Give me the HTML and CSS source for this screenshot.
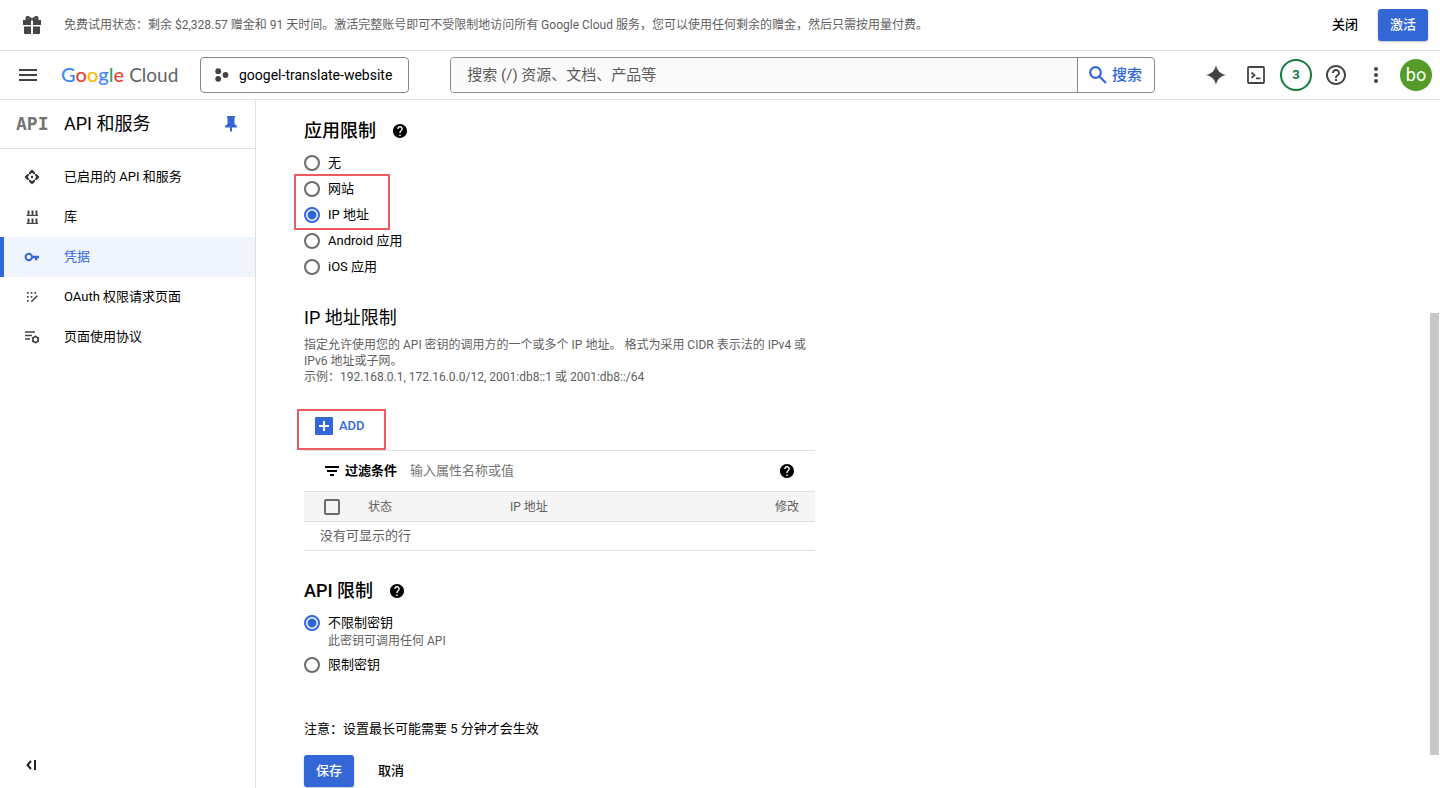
FILE: index.html
```html
<!DOCTYPE html>
<html lang="zh-CN">
<head>
    <meta charset="UTF-8">
    <meta name="viewport" content="width=device-width, initial-scale=1.0">
    <title>API 和服务 - Google Cloud</title>
    <link rel="stylesheet" href="styles.css">
</head>
<body>

    <!-- Shared icons -->
    <svg width="0" height="0" class="sprite" aria-hidden="true">
        <symbol id="help" viewBox="2 2 20 20">
            <path d="M12 2C6.48 2 2 6.48 2 12s4.48 10 10 10 10-4.48 10-10S17.52 2 12 2zm1 17h-2v-2h2v2zm2.07-7.75l-.9.92C13.45 12.9 13 13.5 13 15h-2v-.5c0-1.1.45-2.1 1.17-2.83l1.24-1.26c.37-.36.59-.86.59-1.41 0-1.1-.9-2-2-2s-2 .9-2 2H8c0-2.21 1.79-4 4-4s4 1.79 4 4c0 .88-.36 1.68-.93 2.25z"/>
        </symbol>
    </svg>

    <!-- Free trial banner -->
    <div class="banner">
        <svg class="banner-icon" width="18" height="18" viewBox="0 0 18 18" fill="#444" aria-hidden="true">
            <path d="M0 4h8v5H0zM10 4h8v5h-8zM1 10.500h7V18H2a1 1 0 0 1-1-1zM10 10.500h7V17a1 1 0 0 1-1 1h-6z"/>
            <path d="M2.500 4.500V2A2 2 0 0 1 4.500 0C6.500 0 8 1.500 9 2.800 10 1.500 11.500 0 13.500 0a2 2 0 0 1 2 2v2.500z"/>
            <path d="M4.500 2.500L7 3H5zM13.500 2.500L11 3h2z" fill="#fff"/>
        </svg>
        <p class="banner-text">免费试用状态：剩余 $2,328.57 赠金和 91 天时间。激活完整账号即可不受限制地访问所有 Google Cloud 服务，您可以使用任何剩余的赠金，然后只需按用量付费。</p>
        <button class="btn btn-text">关闭</button>
        <button class="btn btn-primary">激活</button>
    </div>

    <!-- Header -->
    <header class="header">
        <button class="icon-btn menu-btn" aria-label="导航菜单">
            <svg width="18" height="14" viewBox="0 0 18 14" fill="#444"><path d="M0 1h18v2H0zM0 6h18v2H0zM0 11h18v2H0z"/></svg>
        </button>
        <a class="logo" href="#" aria-label="Google Cloud"><span class="g-blue">G</span><span class="g-red">o</span><span class="g-yellow">o</span><span class="g-blue">g</span><span class="g-green">l</span><span class="g-red">e</span> <span class="logo-cloud">Cloud</span></a>
        <button class="project">
            <svg width="14" height="14" viewBox="0 0 14 14" fill="#444" aria-hidden="true"><circle cx="3.200" cy="3.200" r="2.900"/><circle cx="3.200" cy="10.800" r="2.900"/><circle cx="10.500" cy="7" r="2.900"/></svg>
            googel-translate-website
        </button>
        <form class="search">
            <input type="text" aria-label="搜索" placeholder="搜索 (/) 资源、文档、产品等">
            <button type="button">
                <svg width="18" height="18" viewBox="0 0 18 18" fill="none" stroke="#3367d6" stroke-width="2.200" aria-hidden="true"><circle cx="6.500" cy="6.500" r="5.300"/><path d="M10.500 10.500l6.500 6.500"/></svg>
                搜索
            </button>
        </form>
        <div class="tools">
            <button class="icon-btn" aria-label="Gemini">
                <svg width="20" height="20" viewBox="0 0 20 20" fill="#444"><path d="M10 0c1 5.600 4.400 9 10 10-5.600 1-9 4.400-10 10-1-5.600-4.400-9-10-10 5.600-1 9-4.400 10-10z"/></svg>
            </button>
            <button class="icon-btn" aria-label="Cloud Shell">
                <svg width="18" height="18" viewBox="0 0 18 18" fill="none" stroke="#444" stroke-width="1.800"><rect x="1" y="1" width="16" height="16" rx="1"/><path d="M4.500 6.500l3 2.700-3 2.700M9 12.300h4.500"/></svg>
            </button>
            <button class="icon-btn" aria-label="通知"><span class="count">3</span></button>
            <button class="icon-btn" aria-label="帮助">
                <svg width="20" height="20" viewBox="2 2 20 20" fill="#444"><path d="M11 18h2v-2h-2v2zm1-16C6.480 2 2 6.480 2 12s4.480 10 10 10 10-4.480 10-10S17.520 2 12 2zm0 18c-4.410 0-8-3.590-8-8s3.590-8 8-8 8 3.590 8 8-3.590 8-8 8zm0-14c-2.210 0-4 1.790-4 4h2c0-1.100.9-2 2-2s2 .9 2 2c0 2-3 1.750-3 5h2c0-2.250 3-2.500 3-5 0-2.210-1.790-4-4-4z"/></svg>
            </button>
            <button class="icon-btn" aria-label="更多">
                <svg width="4" height="16" viewBox="0 0 4 16" fill="#444"><circle cx="2" cy="2" r="2"/><circle cx="2" cy="8" r="2"/><circle cx="2" cy="14" r="2"/></svg>
            </button>
            <button class="icon-btn" aria-label="账号"><span class="avatar">bo</span></button>
        </div>
    </header>

    <div class="layout">

        <!-- Sidebar -->
        <aside class="sidebar">
            <div class="sidebar-head">
                <span class="api-mark" aria-hidden="true">API</span>
                <span class="sidebar-title">API 和服务</span>
                <svg width="12" height="16" viewBox="0 0 12 16" fill="#3367d6" aria-hidden="true"><path d="M2 0h8v1.500L9.500 2v6L12 10v1.500H7V15l-1 1-1-1v-3.500H0V10l2.500-2V2L2 1.500z"/></svg>
            </div>
            <nav class="nav">
                <a href="#">
                    <svg width="16" height="16" viewBox="0 0 16 16" fill="#333" aria-hidden="true"><path d="M8 .5l3 3v1.300l-1 .7-2-1.700-2 1.700-1-.7V3.500zM8 15.500l3-3v-1.300l-1-.7-2 1.700-2-1.700-1 .7v1.300zM.5 8l3-3h1l.7 1-1.400 2 1.400 2-.7 1h-1zM15.500 8l-3-3h-1l-.7 1 1.400 2-1.400 2 .7 1h1z"/><circle cx="8" cy="8" r="1.200"/></svg>
                    已启用的 API 和服务
                </a>
                <a href="#">
                    <svg width="16" height="16" viewBox="0 0 16 16" fill="none" stroke="#444" stroke-width="2" aria-hidden="true"><path d="M2.500 6.500h11.500M2.500 14.500h11.500" stroke-width="1"/><path d="M4.500 1.500v5M8.500 1.500v5M12.500 1.500v5M4.500 9.500v5M8.500 9.500v5M12.500 9.500v5"/></svg>
                    库
                </a>
                <a href="#" class="active" aria-current="page">
                    <svg width="16" height="16" viewBox="0 0 16 16" fill="none" stroke="#3367d6" stroke-width="2" aria-hidden="true"><circle cx="4.800" cy="8" r="3.200"/><path d="M8 8h7" stroke-width="2.400"/><path d="M12.200 8v3.300" stroke-width="2.400"/></svg>
                    凭据
                </a>
                <a href="#">
                    <svg width="16" height="16" viewBox="0 0 16 16" fill="#444" aria-hidden="true"><path d="M3 3h1.700v1.700H3zM6.700 3h1.700v1.700H6.700zM10.400 3h1.700v1.700h-1.700zM3 7h1.700v1.700H3zM6.700 7h1.700v1.700H6.700zM3 11h1.700v1.700H3z"/><path d="M7.300 12.700l6-6" stroke="#444" stroke-width="1.600"/></svg>
                    OAuth 权限请求页面
                </a>
                <a href="#">
                    <svg width="16" height="16" viewBox="0 0 16 16" fill="none" stroke="#444" stroke-width="1.600" aria-hidden="true"><path d="M1 3h10M1 6.500h7M1 10h5"/><circle cx="11.500" cy="10.500" r="2.700"/><path d="M11.500 6.500V8M11.500 13v1.500M8 8.500l1.300.8M13.700 11.700l1.300.8M8 12.500l1.300-.8M13.700 9.300l1.300-.8"/></svg>
                    页面使用协议
                </a>
            </nav>
            <button class="collapse" aria-label="收起导航">
                <svg width="10" height="10" viewBox="0 0 10 10" fill="none" stroke="#222" stroke-width="2"><path d="M5 1L1.500 5 5 9M9 0v10"/></svg>
            </button>
        </aside>

        <!-- Key restrictions form -->
        <main class="main">
            <form class="form">
                <section class="group" role="radiogroup" aria-labelledby="appTitle">
                    <h2><span id="appTitle">应用限制</span><svg class="help" aria-hidden="true"><use href="#help"/></svg></h2>
                    <label class="radio"><input type="radio" name="app">无</label>
                    <div class="marked marked-radios">
                        <label class="radio"><input type="radio" name="app">网站</label>
                        <label class="radio"><input type="radio" name="app" checked>IP 地址</label>
                    </div>
                    <label class="radio"><input type="radio" name="app">Android 应用</label>
                    <label class="radio"><input type="radio" name="app">iOS 应用</label>
                </section>

                <section class="group">
                    <h2 class="light">IP 地址限制</h2>
                    <p class="desc">指定允许使用您的 API 密钥的调用方的一个或多个 IP 地址。 格式为采用 CIDR 表示法的 IPv4 或 IPv6 地址或子网。<br>示例：192.168.0.1, 172.16.0.0/12, 2001:db8::1 或 2001:db8::/64</p>
                    <div class="add-bar">
                        <div class="marked marked-add">
                            <button type="button" class="add">
                                <svg width="18" height="18" viewBox="0 0 18 18" aria-hidden="true"><rect width="18" height="18" rx="1" fill="#3367d6"/><path d="M9 4v10M4 9h10" stroke="#fff" stroke-width="2"/></svg>
                                ADD
                            </button>
                        </div>
                    </div>
                    <div class="filter">
                        <svg width="14" height="10" viewBox="0 0 14 10" aria-hidden="true"><path d="M0 0h14v2H0zM2 4h10v2H2zM5 8h4v2H5z"/></svg>
                        <label for="filter">过滤条件</label>
                        <input type="text" id="filter" placeholder="输入属性名称或值">
                        <svg class="help" aria-hidden="true"><use href="#help"/></svg>
                    </div>
                    <table class="table">
                        <thead>
                            <tr>
                                <th class="col-check"><input type="checkbox" aria-label="全选"></th>
                                <th class="col-status">状态</th>
                                <th>IP 地址</th>
                                <th class="col-edit">修改</th>
                            </tr>
                        </thead>
                        <tbody>
                            <tr><td colspan="4">没有可显示的行</td></tr>
                        </tbody>
                    </table>
                </section>

                <section class="group" role="radiogroup" aria-labelledby="apiTitle">
                    <h2><span id="apiTitle">API 限制</span><svg class="help" aria-hidden="true"><use href="#help"/></svg></h2>
                    <label class="radio"><input type="radio" name="api" checked>不限制密钥</label>
                    <p class="hint">此密钥可调用任何 API</p>
                    <label class="radio"><input type="radio" name="api">限制密钥</label>
                </section>

                <p class="note">注意：设置最长可能需要 5 分钟才会生效</p>
                <div class="actions">
                    <button type="button" class="btn btn-primary">保存</button>
                    <button type="button" class="btn btn-text">取消</button>
                </div>
            </form>
            <div class="scroll-thumb"></div>
        </main>
    </div>

</body>
</html>
```
FILE: styles.css
```css
* {
    box-sizing: border-box;
}

body {
    display: flex;
    flex-direction: column;
    min-height: 100vh;
    margin: 0;
    background: #fff;
    color: #000;
    font: 13px/20px Roboto, "Noto Sans CJK SC", sans-serif;
}

h2,
p {
    margin: 0;
}

button,
input {
    margin: 0;
    padding: 0;
    border: 0;
    background: none;
    color: inherit;
    font: inherit;
}

button {
    cursor: pointer;
}

a {
    color: inherit;
    text-decoration: none;
}

svg {
    flex: none;
}

.sprite {
    position: absolute;
}

/* Buttons */
.btn {
    height: 32px;
    padding: 0 12px;
    border-radius: 3px;
    font-weight: 500;
    white-space: nowrap;
}

.btn-primary {
    background: #3367d6;
    color: #fff;
    box-shadow: 0 1px 2px rgba(0, 0, 0, 0.25);
}

.icon-btn {
    display: flex;
    align-items: center;
    justify-content: center;
    width: 40px;
    height: 40px;
}

/* Banner */
.banner {
    display: flex;
    align-items: center;
    height: 51px;
    padding: 0 12px 0 23px;
    border-bottom: 1px solid #e0e0e0;
}

.banner-text {
    flex: 1;
    margin-left: 23px;
    color: #5f5f5f;
    font-size: 12px;
}

.banner .btn-text {
    margin-right: 8px;
}

/* Header */
.header {
    display: flex;
    align-items: center;
    height: 49px;
    padding: 0 4px 0 8px;
    border-bottom: 1px solid #e0e0e0;
}

.logo {
    width: 139px;
    margin-left: 13px;
    padding-bottom: 2px;
    font: 20px/26px Lato, sans-serif;
    white-space: nowrap;
}

.logo-cloud {
    color: #5f6368;
    font-size: 19px;
}

.g-blue {
    color: #4285f4;
}

.g-red {
    color: #ea4335;
}

.g-yellow {
    color: #fbbc04;
}

.g-green {
    color: #34a853;
}

.logo span:not(.logo-cloud) {
    font-weight: 500;
}

.project {
    display: flex;
    align-items: center;
    gap: 10px;
    height: 36px;
    padding: 0 16px 0 14px;
    border: 1px solid #80868b;
    border-radius: 4px;
    font-size: 14px;
    white-space: nowrap;
}

.search {
    display: flex;
    flex: 1;
    height: 36px;
    margin: 0 41px;
    border: 1px solid #8a8a8a;
    border-radius: 4px;
    font-size: 15px;
    overflow: hidden;
}

.search input {
    flex: 1;
    min-width: 0;
    padding: 0 16px;
    background: #fafafa;
}

.search input::placeholder {
    color: #5a5a5a;
    opacity: 1;
}

.search button {
    display: flex;
    align-items: center;
    gap: 5px;
    padding: 0 12px 0 11px;
    border-left: 1px solid #8a8a8a;
    color: #3367d6;
    font-weight: 500;
}

.tools {
    display: flex;
    align-items: center;
}

.count,
.avatar {
    width: 32px;
    height: 32px;
    border-radius: 50%;
    text-align: center;
}

.count {
    border: 2px solid #137a40;
    color: #137a40;
    font-size: 13px;
    font-weight: 700;
    line-height: 28px;
}

.avatar {
    background: #559b2a;
    color: #fff;
    font-size: 18px;
    line-height: 32px;
}

/* Sidebar */
.layout {
    display: flex;
    flex: 1;
}

.sidebar {
    display: flex;
    flex: none;
    flex-direction: column;
    width: 256px;
    border-right: 1px solid #e0e0e0;
}

.sidebar-head {
    display: flex;
    align-items: center;
    height: 49px;
    padding: 0 18px 0 16px;
    border-bottom: 1px solid #e0e0e0;
}

.api-mark {
    width: 48px;
    color: #757575;
    font: bold 18px/24px "DejaVu Sans Mono", monospace;
}

.sidebar-title {
    flex: 1;
    font-size: 18px;
}

.nav {
    padding-top: 8px;
}

.nav a {
    display: flex;
    align-items: center;
    gap: 24px;
    height: 40px;
    padding-left: 20px;
    border-left: 4px solid transparent;
}

.nav .active {
    border-left-color: #3367d6;
    background: #f0f5fd;
    color: #3367d6;
}

.collapse {
    display: flex;
    margin: auto 0 18px 26px;
    width: 10px;
}

/* Main form */
.main {
    position: relative;
    flex: 1;
    padding: 19px 48px 0;
}

.form {
    max-width: 511px;
}

.group {
    margin-bottom: 26px;
}

h2 {
    display: flex;
    align-items: center;
    gap: 17px;
    margin-bottom: 7px;
    font-size: 18px;
    font-weight: 500;
    line-height: 24px;
}

.light {
    font-weight: 400;
}

.help {
    width: 14px;
    height: 14px;
}

.radio {
    display: flex;
    align-items: center;
    gap: 8px;
    width: max-content;
    height: 26px;
}

.radio input {
    appearance: none;
    width: 16px;
    height: 16px;
    border: 2px solid #6b6b6b;
    border-radius: 50%;
}

.radio input:checked {
    border-color: #3367d6;
    background: radial-gradient(#3367d6 4px, #fff 5px);
}

/* Red callout frames */
.marked {
    position: relative;
    width: max-content;
}

.marked::after {
    position: absolute;
    border: 2px solid #ea5a5f;
    content: "";
    pointer-events: none;
}

.marked-radios::after {
    inset: -2px -21px -2px -10px;
}

.marked-add::after {
    inset: -4px -21px -11px -18px;
}

.desc,
.hint {
    color: #5f5f5f;
    font-size: 12px;
    line-height: 16px;
}

.hint {
    margin: -3px 0 3px 24px;
}

.add-bar {
    height: 66px;
    padding: 28px 0 0 11px;
    border-bottom: 1px solid #e0e0e0;
}

.add {
    display: flex;
    align-items: center;
    gap: 6px;
    height: 26px;
    color: #3367d6;
    font-weight: 500;
}

.filter {
    display: flex;
    align-items: center;
    height: 40px;
    padding: 0 21px;
}

.filter label {
    margin: 0 13px 0 6px;
    font-weight: 700;
}

.filter input {
    flex: 1;
}

.filter input::placeholder {
    color: #757575;
    opacity: 1;
}

.table {
    width: 100%;
    margin-bottom: 28px;
    border-collapse: collapse;
    table-layout: fixed;
}

.table th {
    height: 30px;
    padding: 0;
    border-top: 1px solid #e0e0e0;
    background: #f5f5f5;
    color: #5f5f5f;
    font-size: 12px;
    font-weight: 400;
    text-align: left;
}

.table td {
    height: 29px;
    padding: 0 16px;
    border-top: 1px solid #e0e0e0;
    border-bottom: 1px solid #e0e0e0;
    color: #5f5f5f;
}

.table .col-check {
    width: 64px;
    padding-left: 20px;
}

.table .col-status {
    width: 142px;
}

.table .col-edit {
    width: 56px;
    padding-right: 16px;
    text-align: right;
}

.table input {
    display: block;
    appearance: none;
    width: 16px;
    height: 16px;
    border: 2px solid #6b6b6b;
    border-radius: 2px;
}

.note {
    margin-top: 41px;
}

.actions {
    display: flex;
    gap: 12px;
    margin-top: 16px;
}

.scroll-thumb {
    position: absolute;
    top: 31%;
    right: 1px;
    bottom: 33px;
    width: 9px;
    background: #c8c8c8;
}
```
